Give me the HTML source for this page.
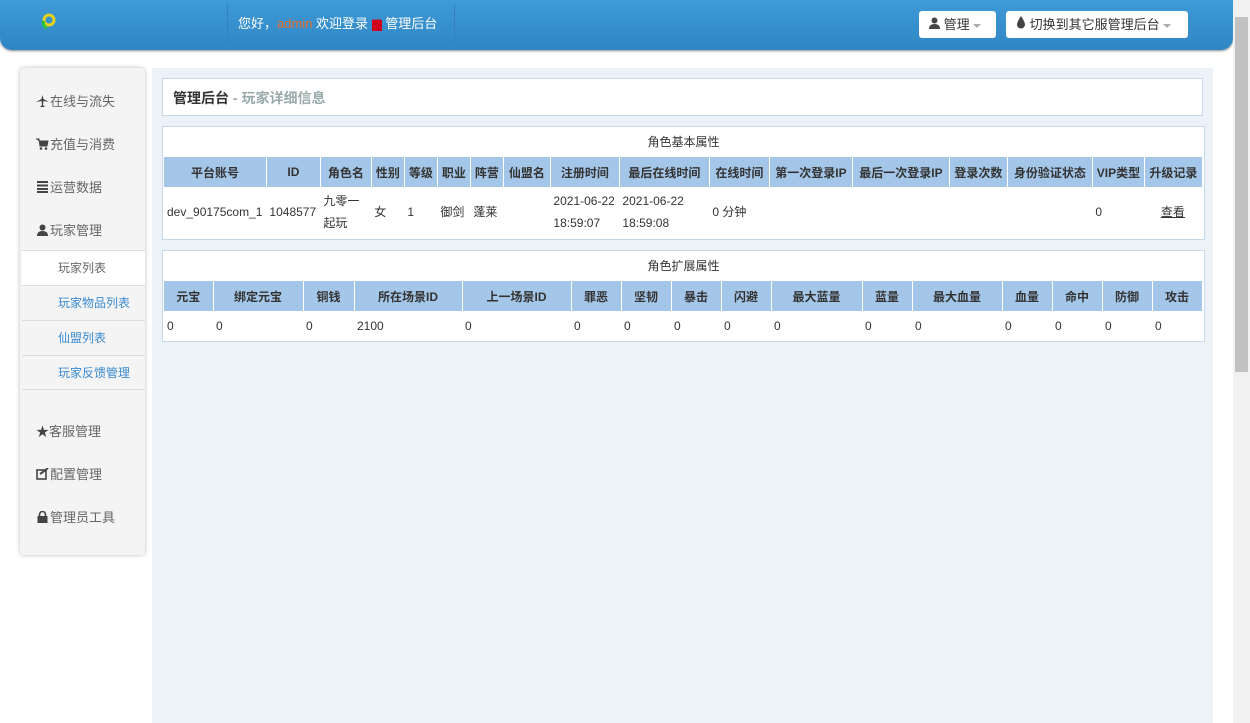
<!DOCTYPE html>
<html><head><meta charset="utf-8"><style>
*{box-sizing:border-box;margin:0;padding:0}
body{width:1250px;height:723px;overflow:hidden;background:#fff;font-family:"Liberation Sans","Noto Sans CJK SC",sans-serif;font-size:12px;color:#333;position:relative}
.hdr{position:absolute;left:0;top:0;width:1233px;height:50px;background:linear-gradient(#3f9ad8,#2f86c4);border-radius:0 0 12px 12px;box-shadow:0 1px 2px #888}
.welcome{position:absolute;left:227px;top:4px;width:228px;height:40px;border-left:1px solid #3480b8;border-right:1px solid #3480b8;color:#fff;font-size:13px;line-height:40px;padding-left:10px}
.btn{position:absolute;top:11px;height:27px;background:#fff;border-radius:3px;font-size:13px;line-height:27px;color:#333;padding-left:10px}
.caret{display:inline-block;border-top:4px solid #aaa;border-left:4px solid transparent;border-right:4px solid transparent;vertical-align:middle;margin-left:3px}
.sb{position:absolute;right:0;top:0;width:17px;height:723px;background:#f1f1f1}
.sb div{position:absolute;left:2px;top:17px;width:13px;height:355px;background:#c1c1c1}
.side{position:absolute;left:20px;top:68px;width:125px;height:487px;background:#f4f4f4;border-radius:4px;box-shadow:0 0 4px #bbb}
.side .it{position:absolute;left:16px;font-size:13px;color:#666;display:flex;align-items:center}
.side .it svg{margin-right:1px}
.sub{position:absolute;left:2px;width:123px;height:35px;border-top:1px solid #ddd;line-height:34px;padding-left:36px;font-size:12px;color:#3a8ad0;background:#f4f4f4}
.main{position:absolute;left:152px;top:68px;width:1061px;height:655px;background:#edf2f9}
.title{position:absolute;left:10px;top:10px;width:1041px;height:38px;background:#fff;border:1px solid #c6d9ea;font-size:14px;font-weight:bold;line-height:38px;padding-left:10px;color:#333}
.title span{color:#9aa}
.box{position:absolute;left:10px;width:1043px;background:#fff;border:1px solid #c6d9ea}
.cap{height:30px;line-height:30px;text-align:center;font-size:12px}
table{border-collapse:collapse;table-layout:fixed;margin-left:1px}
th{background:#a4c6e8;height:30px;font-size:12px;border-right:1px solid #fff;color:#333;font-weight:bold;white-space:nowrap;overflow:hidden}
td{font-size:12px;padding-left:3px;padding-right:4px;text-align:left;line-height:22px}
</style></head><body>
<div class="hdr">
 <svg style="position:absolute;left:38px;top:12px" width="24" height="20"><circle cx="11" cy="8" r="5" fill="none" stroke="#e6d21a" stroke-width="3"/><path d="M6 9 A5 5 0 0 0 9 16" fill="none" stroke="#2bc23a" stroke-width="3"/></svg>
 <div class="welcome">您好，<span style="color:#e8702a">admin</span> 欢迎登录 <span style="background:#d0021b;color:#d0021b;font-size:10px">服</span> 管理后台</div>
 <div class="btn" style="left:919px;width:77px"><svg width="11" height="12" viewBox="0 0 11 12"><circle cx="5.5" cy="3.5" r="3" fill="#444"/><path d="M0 12 Q0 7 5.5 7 Q11 7 11 12Z" fill="#444"/></svg> 管理<span class="caret"></span></div>
 <div class="btn" style="left:1006px;width:182px"><svg width="10" height="13" viewBox="0 0 10 13"><path d="M5 0 Q1 6 1 8.5 A4 4 0 0 0 9 8.5 Q9 6 5 0Z" fill="#444"/></svg> 切换到其它服管理后台<span class="caret"></span></div>
</div>
<div class="sb"><div></div></div>
<div class="side">
 <div class="it" style="top:23px"><svg width="13" height="12" viewBox="0 0 13 12"><path d="M6.5 0 L7.5 4 L13 7 L7.5 6 L7 10 L9 12 L4 12 L6 10 L5.5 6 L0 7 L5.5 4Z" fill="#444"/></svg>在线与流失</div>
 <div class="it" style="top:66px"><svg width="13" height="12" viewBox="0 0 13 12"><path d="M0 1 H3 L4 8 H11 L12 3 H3" fill="#444" stroke="#444"/><circle cx="5" cy="10.5" r="1.3" fill="#444"/><circle cx="10" cy="10.5" r="1.3" fill="#444"/></svg>充值与消费</div>
 <div class="it" style="top:109px"><svg width="13" height="12" viewBox="0 0 13 12"><path d="M1 1H12M1 4.5H12M1 8H12M1 11H12" stroke="#444" stroke-width="2"/></svg>运营数据</div>
 <div class="it" style="top:152px"><svg width="13" height="12" viewBox="0 0 11 12"><circle cx="5.5" cy="3.5" r="3" fill="#444"/><path d="M0 12 Q0 7 5.5 7 Q11 7 11 12Z" fill="#444"/></svg>玩家管理</div>
 <div class="sub" style="top:182px;background:#fff;color:#666">玩家列表</div>
 <div class="sub" style="top:217px">玩家物品列表</div>
 <div class="sub" style="top:252px">仙盟列表</div>
 <div class="sub" style="top:287px;border-bottom:1px solid #ddd">玩家反馈管理</div>
 <div class="it" style="top:353px"><span style="color:#444">★</span>客服管理</div>
 <div class="it" style="top:396px"><svg width="13" height="12" viewBox="0 0 13 12"><rect x="1" y="2" width="9" height="9" fill="none" stroke="#444" stroke-width="1.6"/><path d="M4 6 L7 4 L12 0" stroke="#444" stroke-width="2" fill="none"/></svg>配置管理</div>
 <div class="it" style="top:439px"><svg width="13" height="12" viewBox="0 0 13 12"><rect x="1.5" y="5" width="10" height="7" fill="#444"/><path d="M3.5 5 V3.5 A3 3 0 0 1 9.5 3.5 V5" fill="none" stroke="#444" stroke-width="1.6"/></svg>管理员工具</div>
</div>
<div class="main">
 <div class="title">管理后台 <span>- 玩家详细信息</span></div>
 <div class="box" style="top:58px;height:114px">
  <div class="cap">角色基本属性</div>
  <table><colgroup><col width="101"><col width="54"><col width="51"><col width="33"><col width="33"><col width="33"><col width="33"><col width="47"><col width="69"><col width="90"><col width="60"><col width="83"><col width="97"><col width="58"><col width="85"><col width="52"><col width="58"></colgroup>
  <tr><th>平台账号</th><th>ID</th><th>角色名</th><th>性别</th><th>等级</th><th>职业</th><th>阵营</th><th>仙盟名</th><th>注册时间</th><th>最后在线时间</th><th>在线时间</th><th>第一次登录IP</th><th>最后一次登录IP</th><th>登录次数</th><th>身份验证状态</th><th>VIP类型</th><th>升级记录</th></tr>
  <tr style="height:50px"><td>dev_90175com_1</td><td>1048577</td><td>九零一<br>起玩</td><td>女</td><td>1</td><td>御剑</td><td>蓬莱</td><td></td><td>2021-06-22 18:59:07</td><td>2021-06-22 18:59:08</td><td>0 分钟</td><td></td><td></td><td></td><td></td><td>0</td><td style="text-align:center"><u>查看</u></td></tr>
  </table>
 </div>
 <div class="box" style="top:182px;height:92px">
  <div class="cap">角色扩展属性</div>
  <table><colgroup><col width="49"><col width="90"><col width="51"><col width="108"><col width="109"><col width="50"><col width="50"><col width="50"><col width="50"><col width="91"><col width="50"><col width="90"><col width="50"><col width="50"><col width="50"><col width="50"></colgroup>
  <tr><th>元宝</th><th>绑定元宝</th><th>铜钱</th><th>所在场景ID</th><th>上一场景ID</th><th>罪恶</th><th>坚韧</th><th>暴击</th><th>闪避</th><th>最大蓝量</th><th>蓝量</th><th>最大血量</th><th>血量</th><th>命中</th><th>防御</th><th>攻击</th></tr>
  <tr style="height:30px"><td>0</td><td>0</td><td>0</td><td>2100</td><td>0</td><td>0</td><td>0</td><td>0</td><td>0</td><td>0</td><td>0</td><td>0</td><td>0</td><td>0</td><td>0</td><td>0</td></tr>
  </table>
 </div>
</div>
</body></html>
